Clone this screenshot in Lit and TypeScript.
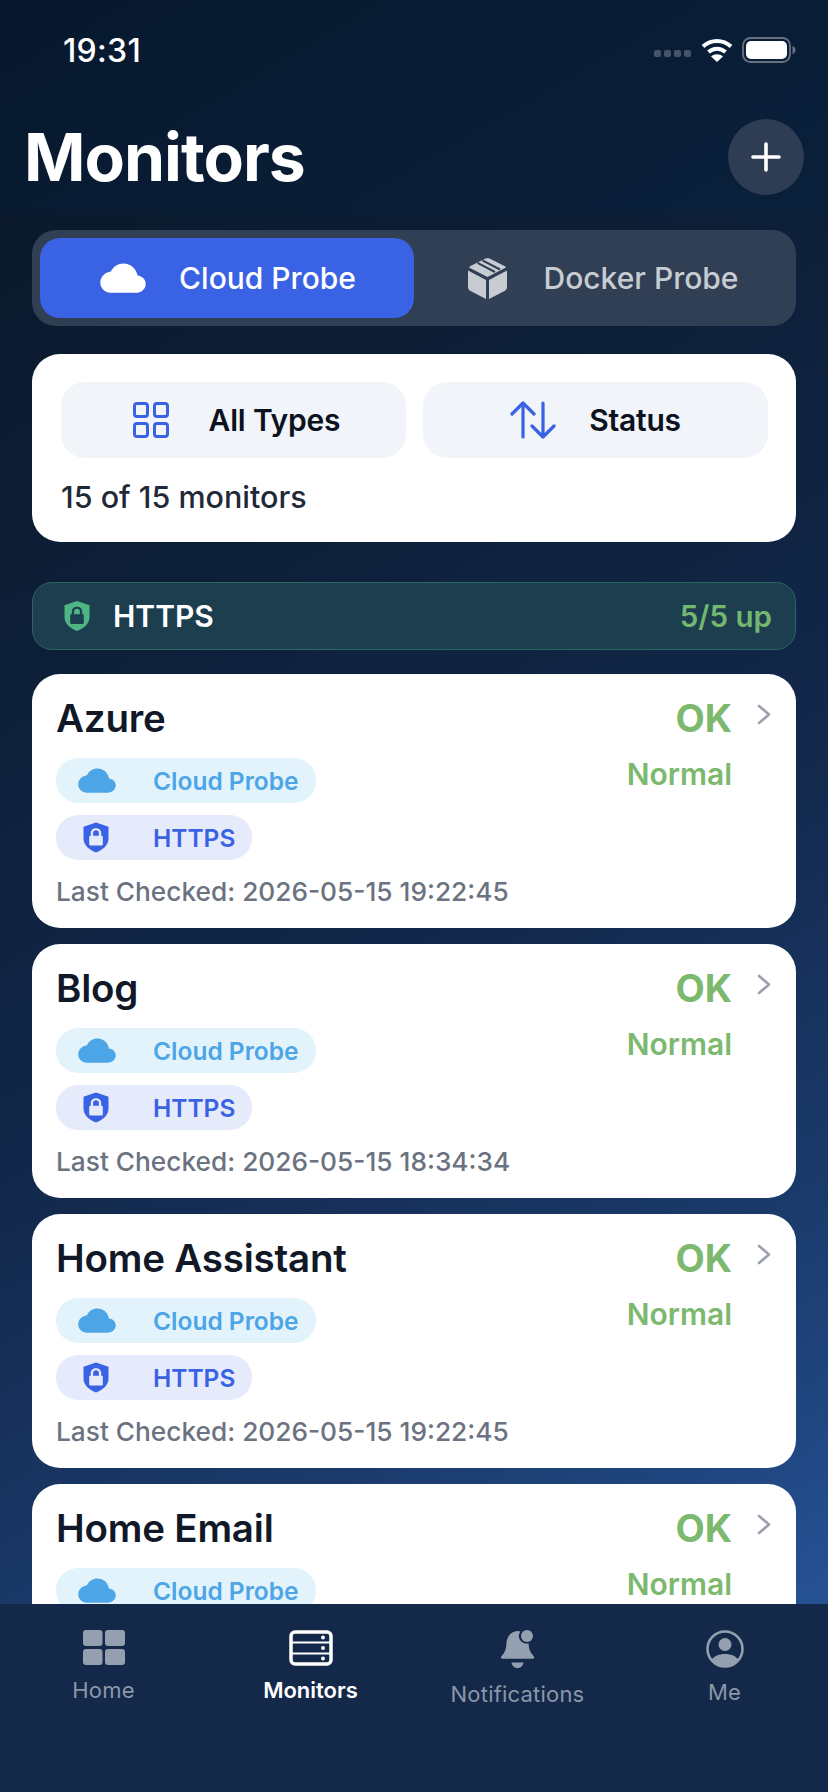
import { LitElement, html, css } from "lit";
import { customElement } from "lit/decorators.js";

const cloud = (c: string, w: number, h: number) => html`<svg width=${w} height=${h} viewBox="0 0 46 30"><path fill=${c} d="M37.5 12.6C36.4 5.6 30.6.5 23.6.5c-5.6 0-10.4 3.1-12.7 8C4.9 9.3.3 13.9.3 19.6c0 6 4.6 10.2 10.6 10.2h24.6c5.9 0 10.2-3.8 10.2-8.9 0-4.500-3.500-7.800-8.200-8.300z"/></svg>`;
const shield = (c: string, lock: string, w: number, h: number) => html`<svg width=${w} height=${h} viewBox="0 0 26 30"><path fill=${c} d="M13 0 25.500 4.200V16C25.500 23 19.500 27.500 13 30 6.500 27.500.5 23 .5 16V4.200z"/><path fill=${lock} fill-rule="evenodd" d="M7.800 13.200V10.500C7.800 7.500 10 5.700 13 5.700s5.200 1.800 5.200 4.800v2.700h.4c.8 0 1.200.5 1.200 1.200v7.400c0 .8-.5 1.200-1.200 1.200H7.400c-.8 0-1.200-.5-1.200-1.200v-7.400c0-.8.500-1.200 1.200-1.200zm2.300 0h5.800V10.500c0-1.700-1.200-2.700-2.900-2.700s-2.900 1-2.900 2.700z"/></svg>`;

type Row = { name: string; time: string; clipped?: boolean };
const rows: Row[] = [
  { name: "Azure", time: "2026-05-15 19:22:45" },
  { name: "Blog", time: "2026-05-15 18:34:34" },
  { name: "Home Assistant", time: "2026-05-15 19:22:45" },
  { name: "Home Email", time: "", clipped: true },
];

@customElement("app-root")
export class AppRoot extends LitElement {
  static styles = css`
    :host { display: block; width: 828px; height: 1792px; font-family: Inter, "Noto Sans", sans-serif; }
    * { box-sizing: border-box; }
    .app { width: 828px; height: 1792px; display: flex; flex-direction: column; overflow: hidden;
      background: linear-gradient(150deg, #0a1626 0%, #0d1f38 30%, #12274a 52%, #1b3c6e 75%, #2b5ca8 100%); }
    .main { flex: 1; min-height: 0; overflow: hidden; }
    .top { background: rgba(0, 36, 72, .22); }
    .status { height: 100px; display: flex; align-items: center; justify-content: space-between; padding: 0 32px 0 63px; }
    .time { color: #fff; font-size: 32px; font-weight: 500; letter-spacing: .3px; }
    .status-icons { display: flex; align-items: center; gap: 0; height: 40px; }
    .dots { display: flex; gap: 3px; margin-right: 9px; margin-top: 7px; }
    .dots i { width: 7px; height: 7px; border-radius: 2px; background: #45546a; display: block; }
    .head { height: 114px; display: flex; align-items: center; justify-content: space-between; padding: 0 24px 0 24px; }
    h1 { margin: 0; color: #fff; font-size: 66px; font-weight: 700; letter-spacing: -1px; }
    .plus { width: 76px; height: 76px; border-radius: 50%; background: #2f3d54; display: flex; align-items: center; justify-content: center; }
    .content { padding: 16px 32px 0; }
    .seg { height: 96px; background: #303f54; border-radius: 24px; padding: 8px; display: grid; grid-template-columns: 374px 1fr; }
    .tab { display: flex; align-items: center; justify-content: center; gap: 33px; font-size: 30px; font-weight: 500; color: #c7ccd3; border-radius: 20px; padding-left: 4px; }
    .tab.on { background: #3a62e4; color: #fff; padding-left: 2px; }
    .tab.dk { gap: 37px; }
    .filters { margin-top: 28px; height: 188px; background: #fff; border-radius: 28px; padding: 28px 29px 0; }
    .btns { display: grid; grid-template-columns: 345px 345px; gap: 17px; }
    .btn { height: 76px; border-radius: 24px; background: #f1f4f9; display: flex; align-items: center; justify-content: center; gap: 33px; font-size: 30px; font-weight: 600; color: #0c1220; letter-spacing: -.2px; }
    .btn.ty { gap: 40px; padding-left: 6px; }
    .count { margin-top: 20px; font-size: 30.500px; font-weight: 500; color: #1f2937; line-height: 37px; }
    .group { margin-top: 40px; height: 68px; border-radius: 20px; border: 1px solid #2c6862; background: #1d3e4f; display: flex; align-items: center; padding: 0 23px 0 31px; color: #fff; font-size: 30px; font-weight: 600; }
    .group .t { margin-left: 23px; flex: 1; }
    .group .n { color: #74b870; font-size: 29.500px; }
    .cards { margin-top: 24px; display: flex; flex-direction: column; gap: 16px; }
    .card { height: 254px; flex: none; background: #fff; border-radius: 28px; padding: 20px 24px 0; position: relative; display: flex; justify-content: space-between; }
    .name { font-size: 38.500px; font-weight: 600; color: #111827; line-height: 48px; letter-spacing: -0.2px; }
    .chip { margin-top: 12px; height: 45px; border-radius: 22px; display: inline-flex; align-items: center; font-size: 24.500px; font-weight: 600; width: max-content; }
    .chip.c { margin-top: 16px; background: #e2f3fc; color: #4ca5e6; padding: 0 17px 0 22px; gap: 37px; }
    .chip.h { background: #e6ebfb; color: #3a62e4; padding: 0 17px 0 27px; gap: 44px; }
    .chips { display: flex; flex-direction: column; }
    .last { margin-top: 14px; font-size: 26.250px; font-weight: 500; color: #6b7280; line-height: 36px; }
    .right { display: flex; flex-direction: column; align-items: flex-end; margin-right: 40px; color: #7cb96f; font-weight: 600; }
    .ok { font-size: 38px; font-weight: 700; line-height: 48px; }
    .norm { font-size: 30px; line-height: 36px; margin-top: 14px; }
    .chev { position: absolute; top: 30px; right: 25px; }
    nav { height: 188px; flex: none; background: #14294a; display: grid; grid-template-columns: repeat(4, 207px); }
    .it { display: flex; flex-direction: column; align-items: center; padding-top: 26px; font-size: 22px; color: #8a97a8; letter-spacing: .2px; }
    .it.on { color: #fff; font-weight: 600; letter-spacing: 0; }
    .ic { display: flex; align-items: center; justify-content: center; }
    .it span { margin-top: 9px; line-height: 30px; }
  `;

  card(r: Row) {
    return html`<div class="card">
      <div>
        <div class="name">${r.name}</div>
        <div class="chips">
          <div class="chip c">${cloud("#4ca5e6", 38, 25)}<span>Cloud Probe</span></div>
          ${r.clipped ? "" : html`<div class="chip h">${shield("#3a62e4", "#e6ebfb", 26, 31)}<span>HTTPS</span></div>`}
        </div>
        ${r.clipped ? "" : html`<div class="last">Last Checked: ${r.time}</div>`}
      </div>
      <div class="right"><div class="ok">OK</div><div class="norm">Normal</div></div>
      <svg class="chev" width="14" height="21" viewBox="0 0 14 21"><path d="M2 2l10 8.500L2 19" fill="none" stroke="#9aa1ad" stroke-width="2.600" stroke-linecap="round" stroke-linejoin="round"/></svg>
    </div>`;
  }

  render() {
    return html`<div class="app">
      <div class="main">
        <div class="top">
        <div class="status">
          <div class="time">19:31</div>
          <div class="status-icons">
            <div class="dots"><i></i><i></i><i></i><i></i></div>
            <svg width="34" height="26" viewBox="0 0 34 26">
              <path d="M3 9.500C11 2 23 2 31 9.500" fill="none" stroke="#fff" stroke-width="4"/>
              <path d="M8.500 15C13.500 10.500 20.500 10.500 25.500 15" fill="none" stroke="#fff" stroke-width="4"/>
              <path d="M17 25l-6-5.500c3.500-3 8.500-3 12 0z" fill="#fff"/>
            </svg>
            <svg style="margin-left:8px" width="54" height="26" viewBox="0 0 54 26">
              <rect x="1" y="1" width="47" height="24" rx="7.500" fill="none" stroke="#67727f" stroke-width="1.800"/>
              <rect x="4" y="4" width="41" height="18" rx="5" fill="#fff"/>
              <path d="M50.500 9c2 .6 3 2 3 4s-1 3.400-3 4z" fill="#67727f"/>
            </svg>
          </div>
        </div>
        <div class="head">
          <h1>Monitors</h1>
          <div class="plus"><svg width="30" height="30" viewBox="0 0 30 30"><path d="M15 2v26M2 15h26" stroke="#fff" stroke-width="3.600" stroke-linecap="round"/></svg></div>
        </div>
        </div>
        <div class="content">
          <div class="seg">
            <div class="tab on">${cloud("#fff", 46, 30)}<span>Cloud Probe</span></div>
            <div class="tab dk">
              <svg width="39" height="41" viewBox="0 0 39 41" fill="#c7ccd3">
                <path d="M17.500.6c1.300-.6 2.700-.6 4 0L37 8.200c1 .5 1 1.300 0 1.800L19.500 19 2 10C1 9.500 1 8.700 2 8.200z"/>
                <path d="M0 12.500 18 22V41L3 33.200C1 32.200 0 31 0 29z"/><path d="M39 12.500V29c0 2-1 3.200-3 4.200L21 41V22z"/>
                <path d="M9.500 4.800 27 14M14.500 2.300 32 11.500" stroke="#303f54" stroke-width="2" fill="none"/>
              </svg>
              <span>Docker Probe</span>
            </div>
          </div>
          <div class="filters">
            <div class="btns">
              <div class="btn ty">
                <svg width="36" height="36" viewBox="0 0 36 36" fill="none" stroke="#3a62e4" stroke-width="3"><rect x="1.500" y="1.500" width="13" height="13" rx="2.500"/><rect x="21.500" y="1.500" width="13" height="13" rx="2.500"/><rect x="1.500" y="21.500" width="13" height="13" rx="2.500"/><rect x="21.500" y="21.500" width="13" height="13" rx="2.500"/></svg>
                <span>All Types</span>
              </div>
              <div class="btn">
                <svg width="46" height="38" viewBox="0 0 46 38" fill="none" stroke="#3a62e4" stroke-width="3.200" stroke-linecap="round" stroke-linejoin="round"><path d="M13 36V2M2 13 13 2l11 11M33 2v34M22 25l11 11 11-11"/></svg>
                <span>Status</span>
              </div>
            </div>
            <div class="count">15 of 15 monitors</div>
          </div>
          <div class="group">
            ${shield("#4fb683", "#1d3e4f", 26, 30)}
            <span class="t">HTTPS</span><span class="n">5/5 up</span>
          </div>
          <div class="cards">${rows.map((r) => this.card(r))}</div>
        </div>
      </div>
      <nav>
        <div class="it">
          <div class="ic"><svg width="42" height="36" viewBox="0 0 42 36" fill="#94a0af"><rect width="19.500" height="16" y="0" rx="3"/><rect x="22" width="20" height="16" rx="3"/><rect y="19" width="19.500" height="16" rx="3"/><rect x="22" y="19" width="20" height="16" rx="3"/></svg></div>
          <span>Home</span>
        </div>
        <div class="it on">
          <div class="ic"><svg width="44" height="36" viewBox="0 0 44 36" fill="none"><rect x="2" y="2" width="40" height="32" rx="4" stroke="#fff" stroke-width="3.500"/><path d="M3 12.500h38M3 23.500h38" stroke="#fff" stroke-width="2"/><circle cx="34" cy="7.500" r="2" fill="#fff"/><circle cx="34" cy="18" r="2" fill="#fff"/><circle cx="34" cy="28.500" r="2" fill="#fff"/></svg></div>
          <span>Monitors</span>
        </div>
        <div class="it">
          <div class="ic"><svg width="36" height="40" viewBox="0 0 36 40" fill="#94a0af"><path d="M17.500 1c1 0 2 .3 3 .5-1.500 2-2 4-1.500 6 .8 3.500 4 6 7.500 6 .7 0 1.400 0 2-.2.3 4.500 1 8.500 4 11.500.5.700 2 1.700 1.700 3-.3.800-1 1-2 1H3c-1 0-1.700-.2-2-1-.3-1.300 1.200-2.300 1.700-3 3-3.500 3.500-7 3.800-12C7 7 10.500 1.500 17.500 1z"/><path d="M11.500 32.500h12c-.5 3.500-3 5.500-6 5.500s-5.500-2-6-5.500z"/><circle cx="27" cy="6" r="6"/></svg></div>
          <span>Notifications</span>
        </div>
        <div class="it">
          <div class="ic"><svg width="38" height="38" viewBox="0 0 38 38"><circle cx="19" cy="19" r="17.500" fill="none" stroke="#94a0af" stroke-width="2.600"/><circle cx="19" cy="14.500" r="6.500" fill="#94a0af"/><path d="M5.500 30C8 26 13 24 19 24s11 2 13.500 6C29 34 24.500 36 19 36S9 34 5.500 30z" fill="#94a0af"/></svg></div>
          <span>Me</span>
        </div>
      </nav>
    </div>`;
  }
}
